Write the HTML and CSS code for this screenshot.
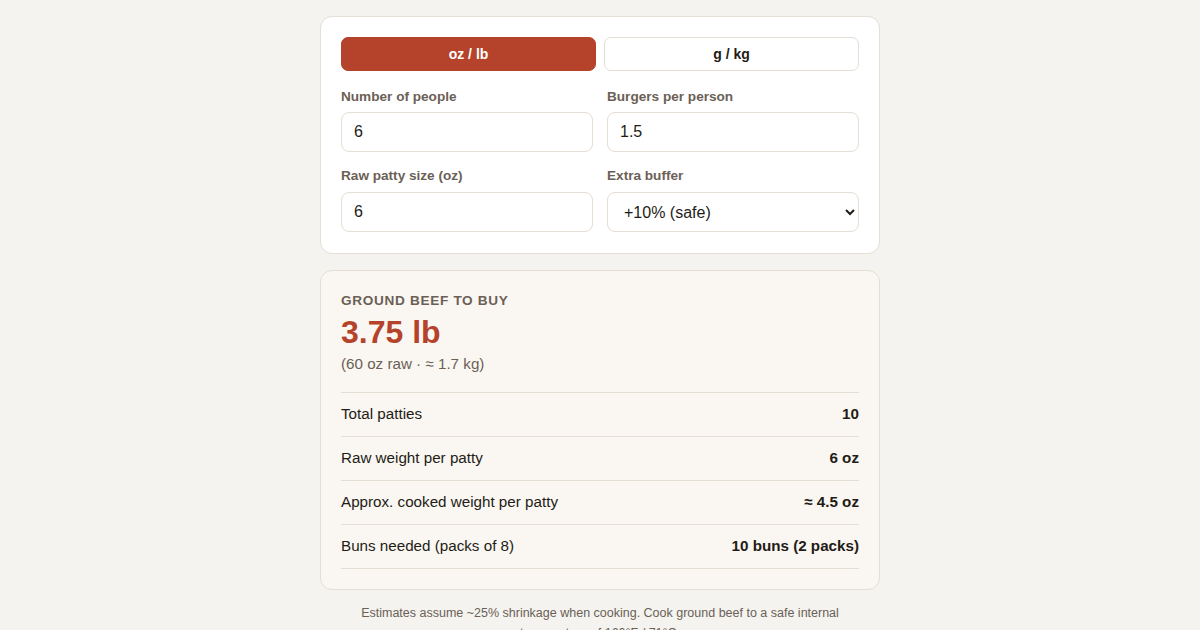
FILE: index.html
```html
<!DOCTYPE html>
<html>
<head>
  <link rel="stylesheet" href="styles.css">
</head>
<body>
  <main class="wrap">
    <div class="card">
      <div class="toggle">
        <button class="tbtn active">oz / lb</button>
        <button class="tbtn">g / kg</button>
      </div>
      <div class="grid">
        <div class="field">
          <label class="label">Number of people</label>
          <input class="input" type="text" value="6">
        </div>
        <div class="field">
          <label class="label">Burgers per person</label>
          <input class="input" type="text" value="1.5">
        </div>
        <div class="field">
          <label class="label">Raw patty size (oz)</label>
          <input class="input" type="text" value="6">
        </div>
        <div class="field">
          <label class="label">Extra buffer</label>
          <select class="input select">
            <option>+10% (safe)</option>
          </select>
        </div>
      </div>
    </div>

    <div class="card result">
      <div class="eyebrow">Ground beef to buy</div>
      <div class="big">3.75 lb</div>
      <div class="sub">(60 oz raw · ≈ 1.7 kg)</div>
      <div class="rows">
        <div class="row"><span>Total patties</span><strong>10</strong></div>
        <div class="row"><span>Raw weight per patty</span><strong>6 oz</strong></div>
        <div class="row"><span>Approx. cooked weight per patty</span><strong>≈ 4.5 oz</strong></div>
        <div class="row"><span>Buns needed (packs of 8)</span><strong>10 buns (2 packs)</strong></div>
      </div>
    </div>

    <p class="note">Estimates assume ~25% shrinkage when cooking. Cook ground beef to a safe internal temperature of 160°F / 71°C.</p>
  </main>
</body>
</html>
```

FILE: styles.css
```css
:root {
  --bg: #f4f3ef;
  --card: #ffffff;
  --card-alt: #faf7f2;
  --border: #e4ded4;
  --fg: #231c16;
  --muted: #6b5f56;
  --primary: #b5432b;
  --radius: 12px;
}

body {
  margin: 0;
  padding: 16px 0;
  background: var(--bg);
  color: var(--fg);
  font-family: "Liberation Sans", Arial, sans-serif;
}

.wrap {
  width: 560px;
  margin: 0 auto;
}

.card {
  background: var(--card);
  border: 1px solid var(--border);
  border-radius: var(--radius);
  padding: 20px 20px 21px;
  margin-bottom: 16px;
}

.toggle {
  display: flex;
  gap: 8px;
  margin-bottom: 18px;
}

.tbtn {
  flex: 1;
  height: 34px;
  border: 1px solid var(--border);
  border-radius: 7px;
  background: #fff;
  color: var(--fg);
  font-family: inherit;
  font-size: 14px;
  font-weight: 700;
  cursor: pointer;
}

.tbtn.active {
  background: var(--primary);
  border-color: var(--primary);
  color: #fff;
}

.grid {
  display: grid;
  grid-template-columns: 1fr 1fr;
  column-gap: 14px;
  row-gap: 16px;
}

.field {
  display: flex;
  flex-direction: column;
  gap: 7px;
}

.field + .field + .field .input {
  margin-top: 1px;
}

.label {
  font-size: 13.6px;
  font-weight: 700;
  color: var(--muted);
  line-height: 16px;
}

.input {
  box-sizing: border-box;
  width: 100%;
  height: 40px;
  padding: 0 12px;
  border: 1px solid var(--border);
  border-radius: 8px;
  background: #fff;
  color: var(--fg);
  font-family: inherit;
  font-size: 16px;
  outline: none;
}

.select {
  padding: 0 8px 0 12px;
}

.result {
  background: var(--card-alt);
  padding: 20px;
  margin-bottom: 13px;
}

.eyebrow {
  font-size: 13.6px;
  font-weight: 700;
  text-transform: uppercase;
  letter-spacing: 0.05em;
  color: var(--muted);
  line-height: 18px;
  margin-top: 1px;
}

.big {
  font-size: 32px;
  font-weight: 700;
  color: var(--primary);
  line-height: 38px;
  margin-top: 3px;
}

.sub {
  font-size: 15.2px;
  color: var(--muted);
  line-height: 20px;
  margin-top: 3px;
}

.rows {
  margin-top: 18px;
  border-top: 1px solid var(--border);
}

.row {
  display: flex;
  justify-content: space-between;
  align-items: center;
  height: 44px;
  padding-bottom: 2px;
  box-sizing: border-box;
  border-bottom: 1px solid var(--border);
  font-size: 15.2px;
}

.row strong {
  font-weight: 700;
}

.note {
  width: 490px;
  margin: 0 auto;
  text-align: center;
  font-size: 12.5px;
  line-height: 20px;
  color: var(--muted);
}
```
